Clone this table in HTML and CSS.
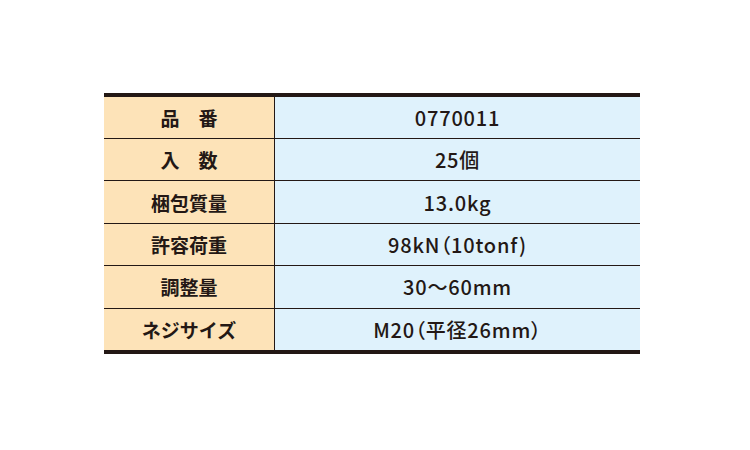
FILE: index.html
```html
<!DOCTYPE html>
<html lang="ja">
<head>
<meta charset="utf-8">
<link rel="stylesheet" href="styles.css">
</head>
<body>
<div class="spec">
  <div class="row"><div class="label">品　番</div><div class="value">0770011</div></div>
  <div class="row"><div class="label">入　数</div><div class="value">25個</div></div>
  <div class="row"><div class="label">梱包質量</div><div class="value">13.0kg</div></div>
  <div class="row"><div class="label">許容荷重</div><div class="value">98kN（10tonf)</div></div>
  <div class="row"><div class="label">調整量</div><div class="value">30～60mm</div></div>
  <div class="row"><div class="label">ネジサイズ</div><div class="value">M20（平径26mm）</div></div>
</div>
</body>
</html>
```

FILE: styles.css
```css
html, body {
  margin: 0;
  padding: 0;
  background: #ffffff;
}
body {
  padding: 93px 0 0 104px;
  font-family: "Noto Sans CJK JP", "Noto Sans", sans-serif;
  color: #231815;
}
.spec {
  width: 536px;
  border-top: 4px solid #231815;
  border-bottom: 4px solid #231815;
  display: flex;
  flex-direction: column;
}
.row {
  display: grid;
  grid-template-columns: 171px 1fr;
  height: 42.4px;
  box-sizing: border-box;
  border-top: 1px solid #231815;
}
.row:first-child {
  border-top: none;
  height: 41px;
}
.label {
  background: #fde3b8;
  border-right: 1px solid #231815;
  display: flex;
  align-items: center;
  justify-content: center;
  font-weight: 700;
  font-size: 19px;
}
.value {
  background: #dff2fc;
  display: flex;
  align-items: center;
  justify-content: center;
  font-weight: 500;
  font-size: 20px;
  letter-spacing: 0.8px;
  font-feature-settings: "palt";
}
```
